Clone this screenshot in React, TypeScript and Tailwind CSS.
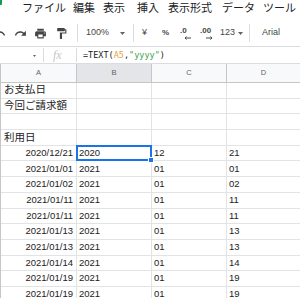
import React from 'react';

const menus = [
  { label: 'ファイル', w: 'w-[51px]' },
  { label: '編集', w: 'w-[30px]' },
  { label: '表示', w: 'w-[34px]' },
  { label: '挿入', w: 'w-[31px]' },
  { label: '表示形式', w: 'w-[54px]' },
  { label: 'データ', w: 'w-[41px]' },
  { label: 'ツール', w: 'w-[60px]' },
];

const rows = [
  ['お支払日', '', '', ''],
  ['今回ご請求額', '', '', ''],
  ['', '', '', ''],
  ['利用日', '', '', ''],
  ['2020/12/21', '2020', '12', '21'],
  ['2021/01/01', '2021', '01', '01'],
  ['2021/01/02', '2021', '01', '02'],
  ['2021/01/11', '2021', '01', '11'],
  ['2021/01/11', '2021', '01', '11'],
  ['2021/01/13', '2021', '01', '13'],
  ['2021/01/13', '2021', '01', '13'],
  ['2021/01/14', '2021', '01', '14'],
  ['2021/01/19', '2021', '01', '19'],
  ['2021/01/19', '2021', '01', '19'],
];

const Caret = ({ w = 5, h = 3 }: { w?: number; h?: number }) => (
  <svg width={w} height={h} viewBox={`0 0 ${w} ${h}`} className="shrink-0 fill-[#5f6368]">
    <path d={`M0 0h${w}L${w / 2} ${h}z`} />
  </svg>
);

const Icon = ({ d }: { d: string }) => (
  <svg width={13} height={13} viewBox="0 0 24 24" className="shrink-0 fill-[#444746]">
    <path d={d} />
  </svg>
);

const Sep = ({ h = 'h-[18px]' }: { h?: string }) => <div className={`w-px shrink-0 bg-[#dadce0] ${h}`} />;

const isJa = (s: string) => /[^\x00-\x7f]/.test(s);

export default function App() {
  return (
    <div className="relative h-[298px] w-[300px] overflow-hidden bg-white font-['Liberation_Sans','Noto_Sans_CJK_JP',sans-serif] text-[#202124]">
      {/* menu */}
      <div className="flex h-[18px] items-center pb-[2px]">
        <div className="mb-auto h-[5px] w-[2px] shrink-0 rounded-br-[1px] bg-[#0f9d58]" />
        <div className="ml-[20px] flex">
          {menus.map((m) => (
            <span key={m.label} className={`${m.w} shrink-0 whitespace-nowrap text-[11px] leading-none`}>
              {m.label}
            </span>
          ))}
        </div>
      </div>

      {/* toolbar */}
      <div className="flex h-[29px] items-center border-b border-[#dadce0] pt-[2px] text-[9px] text-[#444746]">
        <div className="-ml-[7px]">
          <Icon d="M12.5 8c-2.65 0-5.05.99-6.9 2.6L2 7v9h9l-3.62-3.62c1.39-1.16 3.16-1.88 5.12-1.88 3.54 0 6.55 2.31 7.6 5.5l2.37-.78C21.08 11.03 17.15 8 12.5 8z" />
        </div>
        <div className="ml-[8px]">
          <Icon d="M18.4 10.6C16.55 8.99 14.15 8 11.5 8c-4.65 0-8.58 3.03-9.96 7.22L3.9 16c1.05-3.19 4.05-5.5 7.6-5.5 1.95 0 3.73.72 5.12 1.88L13 16h9V7l-3.6 3.6z" />
        </div>
        <div className="ml-[7px]">
          <Icon d="M19 8H5c-1.66 0-3 1.34-3 3v6h4v4h12v-4h4v-6c0-1.66-1.34-3-3-3zm-3 11H8v-5h8v5zm3-7c-.55 0-1-.45-1-1s.45-1 1-1 1 .45 1 1-.45 1-1 1zm-1-9H6v4h12V3z" />
        </div>
        <div className="ml-[8px]">
          <Icon d="M18 4V3c0-.55-.45-1-1-1H5c-.55 0-1 .45-1 1v4c0 .55.45 1 1 1h12c.55 0 1-.45 1-1V6h1v4H9v11c0 .55.45 1 1 1h2c.55 0 1-.45 1-1v-9h8V4h-3z" />
        </div>
        <div className="ml-[9px]"><Sep /></div>
        <span className="ml-[8px] w-[34px] shrink-0">100%</span>
        <Caret />
        <div className="ml-[8px]"><Sep /></div>
        <span className="ml-[8px] w-[20px] shrink-0">¥</span>
        <span className="w-[18px] shrink-0 text-[8px] font-bold">%</span>
        <div className="flex w-[20px] shrink-0 flex-col leading-none">
          <span className="text-[8px] font-bold">.0</span>
          <svg width={7} height={4} viewBox="0 0 7 4" className="ml-[4px] mt-[1px] stroke-[#444746]" fill="none">
            <path d="M7 2H1M2.5 .5L1 2l1.5 1.5" />
          </svg>
        </div>
        <div className="flex w-[20px] shrink-0 flex-col leading-none">
          <span className="text-[8px] font-bold">.00</span>
          <svg width={7} height={4} viewBox="0 0 7 4" className="ml-[6px] mt-[1px] stroke-[#444746]" fill="none">
            <path d="M0 2h6M4.5 .5L6 2 4.5 3.5" />
          </svg>
        </div>
        <span className="w-[18px] shrink-0">123</span>
        <Caret />
        <div className="ml-[6px]"><Sep /></div>
        <span className="ml-[12px] shrink-0">Arial</span>
      </div>

      {/* formula bar */}
      <div className="flex h-[17px] items-center border-b border-[#dadce0]">
        <div className="flex w-[43px] shrink-0 justify-end pr-[7px] pt-[2px]">
          <Caret w={3} h={2} />
        </div>
        <Sep h="h-[14px]" />
        <span className="w-[32px] shrink-0 pl-[9px] font-['Liberation_Serif',serif] text-[12px] italic leading-none text-[#c4c7c5]">fx</span>
        <Sep h="h-[14px]" />
        <span className="whitespace-nowrap pl-[6px] font-['DejaVu_Sans_Mono',monospace] text-[8.5px] text-[#202124]">
          =TEXT(<span className="text-[#e8a33a]">A5</span>,<span className="text-[#3ba24c]">"yyyy"</span>)
        </span>
      </div>

      {/* grid header */}
      <div className="grid h-[19px] grid-cols-[1px_76px_75px_75px_1fr] border-b border-[#c4c7c5] text-[7.5px] text-[#5f6368]">
        <div className="bg-[#c4c7c5]" />
        <div className="flex items-center justify-center border-r border-[#c4c7c5] bg-[#f8f9fa]">A</div>
        <div className="flex items-center justify-center border-r border-[#c4c7c5] bg-[#e3e5e8]">B</div>
        <div className="flex items-center justify-center border-r border-[#c4c7c5] bg-[#f8f9fa]">C</div>
        <div className="flex items-center justify-center bg-[#f8f9fa]">D</div>
      </div>

      {/* cells */}
      <div className="grid auto-rows-[15.7px] grid-cols-[1px_76px_75px_75px_1fr] text-[9.5px] text-[#222]">
        {rows.map((r, i) => (
          <React.Fragment key={i}>
            <div className="bg-[#c4c7c5]" />
            <div
              className={`flex items-center whitespace-nowrap border-b border-r border-[#e2e3e3] ${
                isJa(r[0]) ? 'justify-start pl-[3px] text-[10.5px]' : 'justify-end pr-[3px]'
              }`}
            >
              {r[0]}
            </div>
            <div className="relative flex items-center border-b border-r border-[#e2e3e3] pl-[2px]">
              {r[1]}
              {i === 4 && (
                <div className="absolute -inset-px z-10 border-2 border-[#1a73e8]">
                  <div className="absolute -bottom-[4px] -right-[4px] h-[6px] w-[6px] border border-white bg-[#1a73e8]" />
                </div>
              )}
            </div>
            <div className="flex items-center border-b border-r border-[#e2e3e3] pl-[2px]">{r[2]}</div>
            <div className="flex items-center border-b border-[#e2e3e3] pl-[2px]">{r[3]}</div>
          </React.Fragment>
        ))}
      </div>
    </div>
  );
}
